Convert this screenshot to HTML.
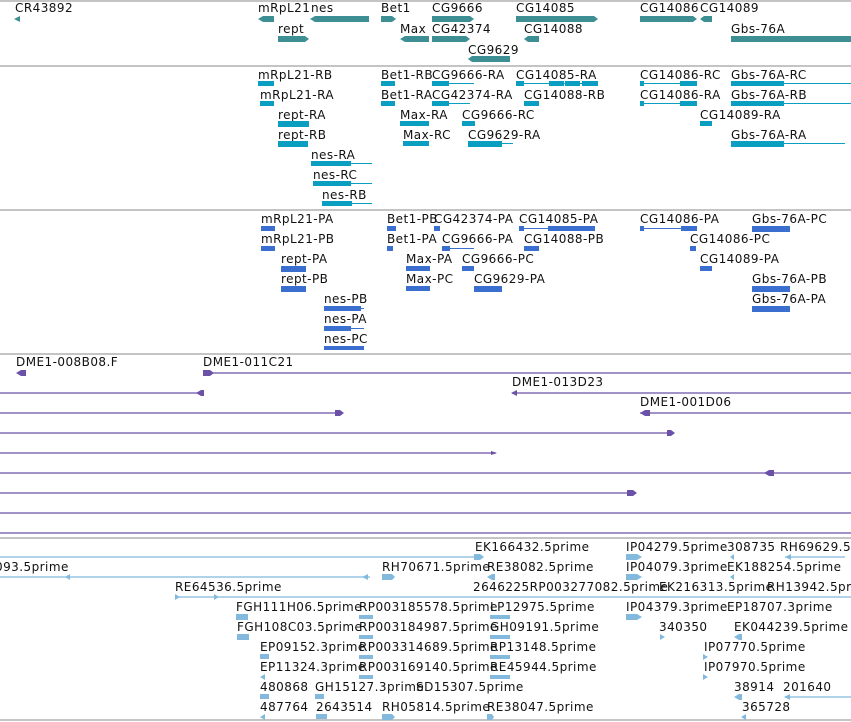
<!DOCTYPE html>
<html><head><meta charset="utf-8"><style>
html,body{margin:0;padding:0;background:#fff;width:851px;height:722px;overflow:hidden}
svg{display:block}
text{font-family:"DejaVu Sans","Liberation Sans",sans-serif;font-size:12px;letter-spacing:0.45px;fill:#111}
.t{fill:#3d8f94}.c{fill:#0a9fc0}.b{fill:#3a6fd0}.p{fill:#6b52a8}.l{fill:#82b9dc}
.tl{stroke:#0a9fc0;stroke-width:1}.bl{stroke:#3a6fd0;stroke-width:1}.pl{stroke:#6b52a8;stroke-width:1.2}.ll{stroke:#82b9dc;stroke-width:1.2}
.sep{stroke:#c4c4c4;stroke-width:2}
</style></head><body>
<svg width="851" height="722" xmlns="http://www.w3.org/2000/svg">
<line class="sep" x1="0" y1="1" x2="851" y2="1"/>
<line class="sep" x1="0" y1="66" x2="851" y2="66"/>
<line class="sep" x1="0" y1="210" x2="851" y2="210"/>
<line class="sep" x1="0" y1="354" x2="851" y2="354"/>
<line class="sep" x1="0" y1="538" x2="851" y2="538"/>
<line class="sep" x1="0" y1="720" x2="851" y2="720"/>

<!-- Section 1 teal -->
<text x="15" y="12">CR43892</text><polygon class="t" points="14,19 20,16 20,22"/>
<text x="258" y="12">mRpL21</text><polygon class="t" points="258,19 263,16 274,16 274,22 263,22"/>
<text x="311" y="12">nes</text><polygon class="t" points="310,19 315,16 369,16 369,22 315,22"/>
<text x="381" y="12">Bet1</text><polygon class="t" points="381,16 392,16 396,19 392,22 381,22"/>
<text x="432" y="12">CG9666</text><polygon class="t" points="432,16 470,16 474,19 470,22 432,22"/>
<text x="516" y="12">CG14085</text><polygon class="t" points="516,16 594,16 598,19 594,22 516,22"/>
<text x="640" y="12">CG14086</text><polygon class="t" points="640,16 693,16 697,19 693,22 640,22"/>
<text x="700" y="12">CG14089</text><polygon class="t" points="700,19 704,16 712,16 712,22 704,22"/>
<text x="278" y="33">rept</text><polygon class="t" points="278,36 305,36 309,39 305,42 278,42"/>
<text x="400" y="33">Max</text><polygon class="t" points="400,39 405,36 429,36 429,42 405,42"/>
<text x="432" y="33">CG42374</text><polygon class="t" points="432,36 466,36 470,39 466,42 432,42"/>
<text x="524" y="33">CG14088</text><polygon class="t" points="524,39 528,36 539,36 539,42 528,42"/>
<text x="731" y="33">Gbs-76A</text><rect class="t" x="731" y="36" width="120" height="6"/>
<text x="468" y="54">CG9629</text><polygon class="t" points="468,59 472,56 510,56 510,62 472,62"/>

<!-- Section 2 cyan -->
<g>
<text x="258" y="79">mRpL21-RB</text><rect class="c" x="258" y="81" width="16" height="5"/>
<text x="381" y="79">Bet1-RB</text><rect class="c" x="381" y="81" width="14" height="5"/>
<text x="432" y="79">CG9666-RA</text><rect class="c" x="432" y="81" width="17" height="5"/><line class="tl" x1="449" y1="83.5" x2="474" y2="83.5"/>
<text x="516" y="79">CG14085-RA</text><line class="tl" x1="516" y1="83.5" x2="598" y2="83.5"/><rect class="c" x="549" y="81" width="15" height="5"/><rect class="c" x="565" y="81" width="15" height="5"/><rect class="c" x="582" y="81" width="16" height="5"/><rect class="c" x="516" y="81" width="8" height="5"/>
<text x="640" y="79">CG14086-RC</text><line class="tl" x1="640" y1="83.5" x2="697" y2="83.5"/><rect class="c" x="680" y="81" width="17" height="5"/><rect class="c" x="640" y="81" width="4" height="5"/>
<text x="731" y="79">Gbs-76A-RC</text><rect class="c" x="731" y="81" width="53" height="5"/><line class="tl" x1="784" y1="83.5" x2="851" y2="83.5"/>

<text x="260" y="99">mRpL21-RA</text><rect class="c" x="260" y="101" width="14" height="5"/>
<text x="381" y="99">Bet1-RA</text><rect class="c" x="381" y="101" width="14" height="5"/>
<text x="432" y="99">CG42374-RA</text><rect class="c" x="432" y="101" width="17" height="5"/><line class="tl" x1="449" y1="103.5" x2="470" y2="103.5"/>
<text x="524" y="99">CG14088-RB</text><rect class="c" x="524" y="101" width="15" height="5"/>
<text x="640" y="99">CG14086-RA</text><line class="tl" x1="640" y1="103.5" x2="697" y2="103.5"/><rect class="c" x="680" y="101" width="17" height="5"/><rect class="c" x="640" y="101" width="4" height="5"/>
<text x="731" y="99">Gbs-76A-RB</text><rect class="c" x="731" y="101" width="53" height="5"/><line class="tl" x1="784" y1="103.5" x2="851" y2="103.5"/>

<text x="278" y="119">rept-RA</text><rect class="c" x="278" y="121" width="31" height="6"/>
<text x="400" y="119">Max-RA</text><rect class="c" x="400" y="121" width="29" height="5"/>
<text x="462" y="119">CG9666-RC</text><rect class="c" x="462" y="121" width="13" height="5"/>
<text x="700" y="119">CG14089-RA</text><rect class="c" x="700" y="121" width="12" height="5"/>

<text x="278" y="139">rept-RB</text><rect class="c" x="278" y="141" width="30" height="6"/>
<text x="403" y="139">Max-RC</text><rect class="c" x="403" y="141" width="26" height="5"/>
<text x="468" y="139">CG9629-RA</text><rect class="c" x="468" y="141" width="34" height="6"/><line class="tl" x1="502" y1="143.5" x2="513" y2="143.5"/>
<text x="731" y="139">Gbs-76A-RA</text><rect class="c" x="731" y="141" width="53" height="6"/><line class="tl" x1="784" y1="143.5" x2="845" y2="143.5"/>

<text x="311" y="159">nes-RA</text><rect class="c" x="311" y="161" width="40" height="5"/><line class="tl" x1="351" y1="163.5" x2="372" y2="163.5"/>
<text x="313" y="179">nes-RC</text><rect class="c" x="313" y="181" width="38" height="5"/><line class="tl" x1="351" y1="183.5" x2="372" y2="183.5"/>
<text x="322" y="199">nes-RB</text><rect class="c" x="322" y="201" width="30" height="5"/><line class="tl" x1="352" y1="203.5" x2="372" y2="203.5"/>
</g>

<!-- Section 3 blue -->
<g>
<text x="261" y="223">mRpL21-PA</text><rect class="b" x="261" y="226" width="14" height="5"/>
<text x="387" y="223">Bet1-PB</text><rect class="b" x="387" y="226" width="9" height="5"/>
<text x="434" y="223">CG42374-PA</text><rect class="b" x="434" y="226" width="6" height="5"/>
<text x="519" y="223">CG14085-PA</text><line class="bl" x1="519" y1="228.5" x2="595" y2="228.5"/><rect class="b" x="548" y="226" width="47" height="5"/><rect class="b" x="519" y="226" width="5" height="5"/>
<text x="640" y="223">CG14086-PA</text><line class="bl" x1="640" y1="228.5" x2="697" y2="228.5"/><rect class="b" x="681" y="226" width="16" height="5"/><rect class="b" x="640" y="226" width="4" height="5"/>
<text x="752" y="223">Gbs-76A-PC</text><rect class="b" x="752" y="226" width="38" height="6"/>

<text x="261" y="243">mRpL21-PB</text><rect class="b" x="261" y="246" width="14" height="5"/>
<text x="387" y="243">Bet1-PA</text><rect class="b" x="387" y="246" width="6" height="5"/>
<text x="442" y="243">CG9666-PA</text><rect class="b" x="442" y="246" width="8" height="5"/><line class="bl" x1="450" y1="248.5" x2="474" y2="248.5"/>
<text x="524" y="243">CG14088-PB</text><rect class="b" x="524" y="246" width="15" height="5"/>
<text x="690" y="243">CG14086-PC</text><rect class="b" x="690" y="246" width="6" height="5"/>

<text x="281" y="263">rept-PA</text><rect class="b" x="281" y="266" width="25" height="6"/>
<text x="406" y="263">Max-PA</text><rect class="b" x="406" y="266" width="24" height="5"/>
<text x="462" y="263">CG9666-PC</text><rect class="b" x="462" y="266" width="12" height="5"/>
<text x="700" y="263">CG14089-PA</text><rect class="b" x="700" y="266" width="12" height="5"/>

<text x="281" y="283">rept-PB</text><rect class="b" x="281" y="286" width="25" height="6"/>
<text x="406" y="283">Max-PC</text><rect class="b" x="406" y="286" width="24" height="5"/>
<text x="474" y="283">CG9629-PA</text><rect class="b" x="474" y="286" width="28" height="6"/>
<text x="752" y="283">Gbs-76A-PB</text><rect class="b" x="752" y="286" width="38" height="6"/>

<text x="324" y="303">nes-PB</text><rect class="b" x="324" y="306" width="37" height="5"/><line class="bl" x1="351" y1="308.5" x2="364" y2="308.5"/>
<text x="752" y="303">Gbs-76A-PA</text><rect class="b" x="752" y="306" width="38" height="6"/>
<text x="324" y="323">nes-PA</text><rect class="b" x="324" y="326" width="27" height="5"/><line class="bl" x1="351" y1="328.5" x2="364" y2="328.5"/>
<text x="324" y="343">nes-PC</text><rect class="b" x="324" y="346" width="40" height="4"/>
</g>

<!-- Section 4 purple -->
<g>
<text x="16" y="366">DME1-008B08.F</text><polygon class="p" points="16,373 21,370 26,370 26,376 21,376"/>
<text x="203" y="366">DME1-011C21</text><polygon class="p" points="203,370 210,370 214,373 210,376 203,376"/><line class="pl" x1="210" y1="373" x2="851" y2="373"/>
<line class="pl" x1="0" y1="393" x2="203" y2="393"/><polygon class="p" points="196,393 201,390 204,390 204,396 201,396"/>
<text x="512" y="386">DME1-013D23</text><line class="pl" x1="512" y1="393" x2="851" y2="393"/><polygon class="p" points="511,393 517,390 517,396"/>
<line class="pl" x1="0" y1="413" x2="343" y2="413"/><polygon class="p" points="335,410 340,410 344,413 340,416 335,416"/>
<text x="640" y="406">DME1-001D06</text><line class="pl" x1="640" y1="413" x2="851" y2="413"/><polygon class="p" points="640,413 645,410 650,410 650,416 645,416"/>
<line class="pl" x1="0" y1="433" x2="674" y2="433"/><polygon class="p" points="667,430 671,430 675,433 671,436 667,436"/>
<line class="pl" x1="0" y1="453" x2="496" y2="453"/><polygon class="p" points="491,451 497,453 491,455"/>
<line class="pl" x1="0" y1="473" x2="851" y2="473"/><polygon class="p" points="764,473 769,470 774,470 774,476 769,476"/>
<line class="pl" x1="0" y1="493" x2="636" y2="493"/><polygon class="p" points="627,490 633,490 637,493 633,496 627,496"/>
<line class="pl" x1="0" y1="513" x2="851" y2="513"/>
<line class="pl" x1="0" y1="533" x2="851" y2="533"/>
</g>

<!-- Section 5 light blue -->
<g>
<line class="ll" x1="0" y1="557" x2="475" y2="557"/><polygon class="l" points="474,554 480,554 484,557 480,560 474,560"/>
<text x="475" y="551">EK166432.5prime</text>
<text x="626" y="551">IP04279.5prime</text><polygon class="l" points="626,554 637,554 642,557 637,560 626,560"/>
<text x="727" y="551">308735</text><polygon class="l" points="730,557 734,554 734,560"/>
<text x="780" y="551">RH69629.5prime</text><line class="ll" x1="785" y1="557" x2="845" y2="557"/><polygon class="l" points="785,557 791,554 791,560"/>

<text x="-5" y="571">093.5prime</text>
<line class="ll" x1="0" y1="577" x2="370" y2="577"/><polygon class="l" points="65,577 70,574 70,580"/><polygon class="l" points="362,577 368,574 368,580"/>
<text x="382" y="571">RH70671.5prime</text><polygon class="l" points="382,574 392,574 395,577 392,580 382,580"/>
<text x="487" y="571">RE38082.5prime</text><polygon class="l" points="487,577 492,574 495,574 495,580 492,580"/>
<text x="626" y="571">IP04079.3prime</text><polygon class="l" points="626,574 637,574 642,577 637,580 626,580"/>
<text x="727" y="571">EK188254.5prime</text><polygon class="l" points="730,577 734,574 734,580"/>

<text x="175" y="591">RE64536.5prime</text><line class="ll" x1="175" y1="597" x2="851" y2="597"/><polygon class="l" points="175,594 180,597 175,600"/><polygon class="l" points="214,594 219,597 214,600"/>
<text x="473" y="591">2646225RP003277082.5prime</text>
<text x="659" y="591">EK216313.5prime</text>
<text x="767" y="591">RH13942.5prime</text>

<text x="236" y="611">FGH111H06.5prime</text><rect class="l" x="236" y="614" width="12" height="6"/>
<text x="359" y="611">RP003185578.5prime</text><rect class="l" x="359" y="615" width="14" height="4"/>
<text x="490" y="611">LP12975.5prime</text><rect class="l" x="490" y="615" width="20" height="4"/>
<text x="626" y="611">IP04379.3prime</text><polygon class="l" points="626,614 637,614 642,617 637,620 626,620"/>
<text x="727" y="611">EP18707.3prime</text>

<text x="237" y="631">FGH108C03.5prime</text><rect class="l" x="237" y="634" width="12" height="6"/>
<text x="359" y="631">RP003184987.5prime</text><rect class="l" x="359" y="635" width="14" height="4"/>
<text x="490" y="631">GH09191.5prime</text><rect class="l" x="490" y="635" width="20" height="4"/>
<text x="659" y="631">340350</text><polygon class="l" points="660,634 665,637 660,640"/>
<text x="734" y="631">EK044239.5prime</text><polygon class="l" points="734,637 739,634 742,634 742,640 739,640"/>

<text x="260" y="651">EP09152.3prime</text><rect class="l" x="260" y="654" width="9" height="5"/>
<text x="359" y="651">RP003314689.5prime</text><rect class="l" x="359" y="655" width="14" height="4"/>
<text x="490" y="651">RP13148.5prime</text><rect class="l" x="490" y="655" width="20" height="4"/>
<text x="704" y="651">IP07770.5prime</text><polygon class="l" points="703,654 708,657 703,660"/>

<text x="260" y="671">EP11324.3prime</text><polygon class="l" points="260,677 265,674 265,680"/>
<text x="359" y="671">RP003169140.5prime</text><rect class="l" x="359" y="675" width="14" height="4"/>
<text x="490" y="671">RE45944.5prime</text><rect class="l" x="490" y="675" width="20" height="4"/>
<text x="704" y="671">IP07970.5prime</text><polygon class="l" points="703,674 708,677 703,680"/>

<text x="260" y="691">480868</text><rect class="l" x="260" y="694" width="9" height="5"/>
<text x="315" y="691">GH15127.3prime</text><rect class="l" x="315" y="694" width="9" height="5"/>
<text x="416" y="691">SD15307.5prime</text>
<text x="734" y="691">38914</text><polygon class="l" points="734,697 739,694 742,694 742,700 739,700"/>
<text x="783" y="691">201640</text><line class="ll" x1="785" y1="697" x2="851" y2="697"/><polygon class="l" points="784,697 790,694 790,700"/>

<text x="260" y="711">487764</text><polygon class="l" points="260,717 265,714 265,720"/>
<text x="316" y="711">2643514</text><rect class="l" x="316" y="714" width="11" height="5"/>
<text x="382" y="711">RH05814.5prime</text><polygon class="l" points="382,714 392,714 395,717 392,720 382,720"/>
<text x="487" y="711">RE38047.5prime</text><polygon class="l" points="487,714 492,714 494,717 492,720 487,720"/>
<text x="742" y="711">365728</text><polygon class="l" points="741,717 746,714 746,720"/>
</g>
</svg>
</body></html>
